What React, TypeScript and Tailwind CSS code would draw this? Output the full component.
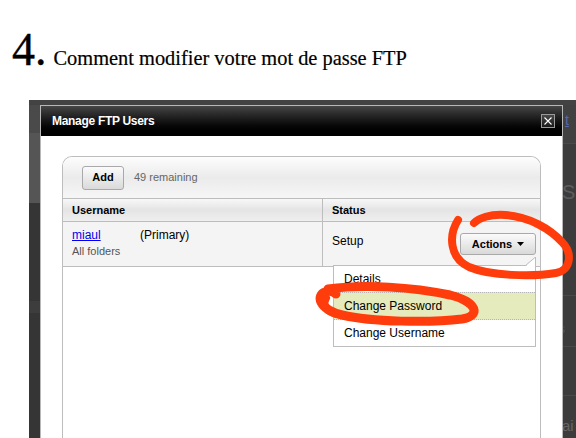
import React from "react";

function CloseBox() {
  return (
    <div className="w-[14px] h-[14px] border border-[#9a9a9a] bg-linear-to-b from-[#4a4a4a] to-[#1a1a1a] flex items-center justify-center">
      <svg width="10" height="10" viewBox="0 0 10 10">
        <path d="M1.5 1.5 L8.5 8.5 M8.5 1.5 L1.5 8.5" stroke="#ffffff" strokeWidth="1.1" />
      </svg>
    </div>
  );
}

function Annotations() {
  return (
    <svg
      className="absolute left-0 top-0 pointer-events-none blur-[0.5px]"
      width="576"
      height="438"
      viewBox="0 0 576 438"
    >
      <path
        d="M458 220 C448 236, 450 258, 469 267 C490 276, 532 277, 556 273 C572 270, 572 252, 562 242 C550 229, 530 217, 505 215 C490 214, 479 218, 474 223"
        fill="none"
        stroke="#ff3d0c"
        strokeWidth="8"
        strokeLinecap="round"
        strokeLinejoin="round"
      />
      <path
        d="M328 289 C365 284, 412 287, 450 295 C478 302, 481 316, 462 319 C430 323, 372 322, 342 315 C318 309, 316 295, 325 292 C330 290, 334 292, 336 294"
        fill="none"
        stroke="#ff3d0c"
        strokeWidth="9"
        strokeLinecap="round"
        strokeLinejoin="round"
      />
      <path
        d="M326 298 C322 304, 326 311, 336 314"
        fill="none"
        stroke="#ff3d0c"
        strokeWidth="8"
        strokeLinecap="round"
      />
    </svg>
  );
}

export default function App() {
  return (
    <div className="relative w-[576px] h-[438px] overflow-hidden bg-white font-['Liberation_Sans',Arial,sans-serif]">
      {/* Heading */}
      <div className="h-[100px] pl-[12px] pt-[27px] flex items-baseline font-['Liberation_Serif','Times_New_Roman',serif] text-black">
        <span className="text-[46px] leading-none [-webkit-text-stroke:0.4px_#000]">4.</span>
        <span className="ml-[7px] text-[20.4px] leading-none [-webkit-text-stroke:0.2px_#000]">
          Comment modifier votre mot de passe FTP
        </span>
      </div>

      {/* Backdrop */}
      <div className="ml-[29px] h-[338px] flex flex-col bg-[#404040]">
        <div className="h-[5px] bg-[#434343]" />
        <div className="flex flex-1 min-h-0">
          {/* left strip */}
          <div className="w-[11px] flex flex-col">
            <div className="h-[28px] bg-[#4a4a4a]" />
            <div className="h-[70px] bg-[#555555]" />
            <div className="h-[98px] bg-[#353535]" />
            <div className="h-[12px] bg-[#3d3d3d]" />
            <div className="flex-1 bg-[#353535]" />
          </div>

          {/* Modal */}
          <div className="w-[523px] flex flex-col border border-b-0 border-[#b8b8b8] bg-white">
            <div className="h-[30px] flex items-center justify-between pl-[11px] pr-[7px] bg-linear-to-b from-[#464646] via-[#151515] to-[#000000]">
              <span className="text-white font-bold text-[12px] tracking-[-0.3px] [text-shadow:0_1px_1px_#000,0_0_2px_#223]">
                Manage FTP Users
              </span>
              <CloseBox />
            </div>

            <div className="flex-1 px-[21px] pt-[20px] min-h-0">
              <div className="relative h-[300px] border border-b-0 border-[#bdbdbd] rounded-t-[10px] bg-white">
                {/* toolbar */}
                <div className="h-[42px] flex items-center pl-[19px] border-b border-[#bdbdbd] rounded-t-[9px] bg-linear-to-b from-[#fdfdfd] via-[#ebebeb] to-[#f6f6f6]">
                  <div className="w-[42px] h-[24px] flex items-center justify-center border border-[#a9a9a9] rounded-[3px] bg-linear-to-b from-[#fbfbfb] to-[#dadada] text-[11px] font-bold text-black">
                    Add
                  </div>
                  <span className="ml-[10px] text-[11px] text-[#666666]">49 remaining</span>
                </div>

                {/* header */}
                <div className="h-[23px] flex border-b border-[#bdbdbd] bg-linear-to-b from-[#f8f8f8] via-[#e4e4e4] to-[#efefef] text-[11px] font-bold text-black">
                  <div className="w-[259px] flex items-center pl-[9px]">Username</div>
                  <div className="flex-1 flex items-center pl-[9px] border-l border-[#bdbdbd]">Status</div>
                </div>

                {/* data row */}
                <div className="h-[45px] flex border-b border-[#bdbdbd] bg-[#f4f4f4]">
                  <div className="w-[259px] pl-[9px] pt-[6px]">
                    <div className="flex text-[12px] leading-[14px] text-black">
                      <span className="w-[68px] text-[#0000ee] underline">miaul</span>
                      <span>(Primary)</span>
                    </div>
                    <div className="mt-[3px] text-[11px] leading-[13px] text-[#555555]">All folders</div>
                  </div>
                  <div className="flex-1 flex items-start justify-between pl-[9px] pr-[4px] pt-[11px] border-l border-[#bdbdbd]">
                    <span className="mt-[1px] text-[12px] leading-[14px] text-black">Setup</span>
                    <div className="w-[76px] h-[22px] flex items-center justify-center gap-[5px] border border-[#a9a9a9] rounded-[3px] bg-linear-to-b from-[#fbfbfb] to-[#d9d9d9] text-[11px] font-bold text-black">
                      <span>Actions</span>
                      <svg width="7" height="4" viewBox="0 0 7 4">
                        <path d="M0 0 L7 0 L3.5 4 Z" fill="#000" />
                      </svg>
                    </div>
                  </div>
                </div>

                {/* dropdown menu */}
                <div className="absolute left-[270px] top-[108px] w-[203px] border border-[#bdbdbd] bg-white text-[12px] text-black">
                  <svg
                    className="absolute right-[-1px] top-[-9px]"
                    width="11"
                    height="10"
                    viewBox="0 0 11 10"
                  >
                    <polygon points="0,10 10,0.5 10.5,0.5 10.5,10" fill="#ffffff" />
                    <path d="M0.5 8.5 L10 0.5" stroke="#bdbdbd" strokeWidth="1" fill="none" />
                    <path d="M10.5 0 L10.5 10" stroke="#bdbdbd" strokeWidth="1" fill="none" />
                  </svg>
                  <div className="h-[26px] flex items-center pl-[10px]">Details</div>
                  <div className="h-[28px] flex items-center pl-[10px] bg-[#e5ebbd] border-y border-dotted border-[#b5b5b5]">
                    Change Password
                  </div>
                  <div className="h-[26px] flex items-center pl-[10px]">Change Username</div>
                </div>
              </div>
            </div>
          </div>

          {/* right strip */}
          <div className="flex-1 flex flex-col overflow-hidden bg-[#3c3c3c]">
            <div className="h-[38px] bg-[#414141] pl-[2px] pt-[3px]">
              <span className="text-[14px] leading-[14px] text-[#5a67a8] underline">t</span>
            </div>
            <div className="h-[1px] bg-[#4a4a4a]" />
            <div className="h-[153px] pt-[38px] ml-[-1px] whitespace-nowrap">
              <span className="text-[20px] leading-[20px] text-[#5c5c5c]">Sn</span>
            </div>
            <div className="h-[1px] bg-[#4a4a4a]" />
            <div className="h-[50px] pt-[20px] whitespace-nowrap ml-[-4px]">
              <span className="text-[12px] leading-[12px] text-[#555555]">s</span>
            </div>
            <div className="h-[1px] bg-[#4a4a4a]" />
            <div className="h-[49px]" />
            <div className="h-[1px] bg-[#4a4a4a]" />
            <div className="flex-1 pt-[18px] whitespace-nowrap ml-[-1px]">
              <span className="text-[15px] leading-[15px] text-[#666666]">ai</span>
            </div>
          </div>
        </div>
      </div>

      <Annotations />
    </div>
  );
}
